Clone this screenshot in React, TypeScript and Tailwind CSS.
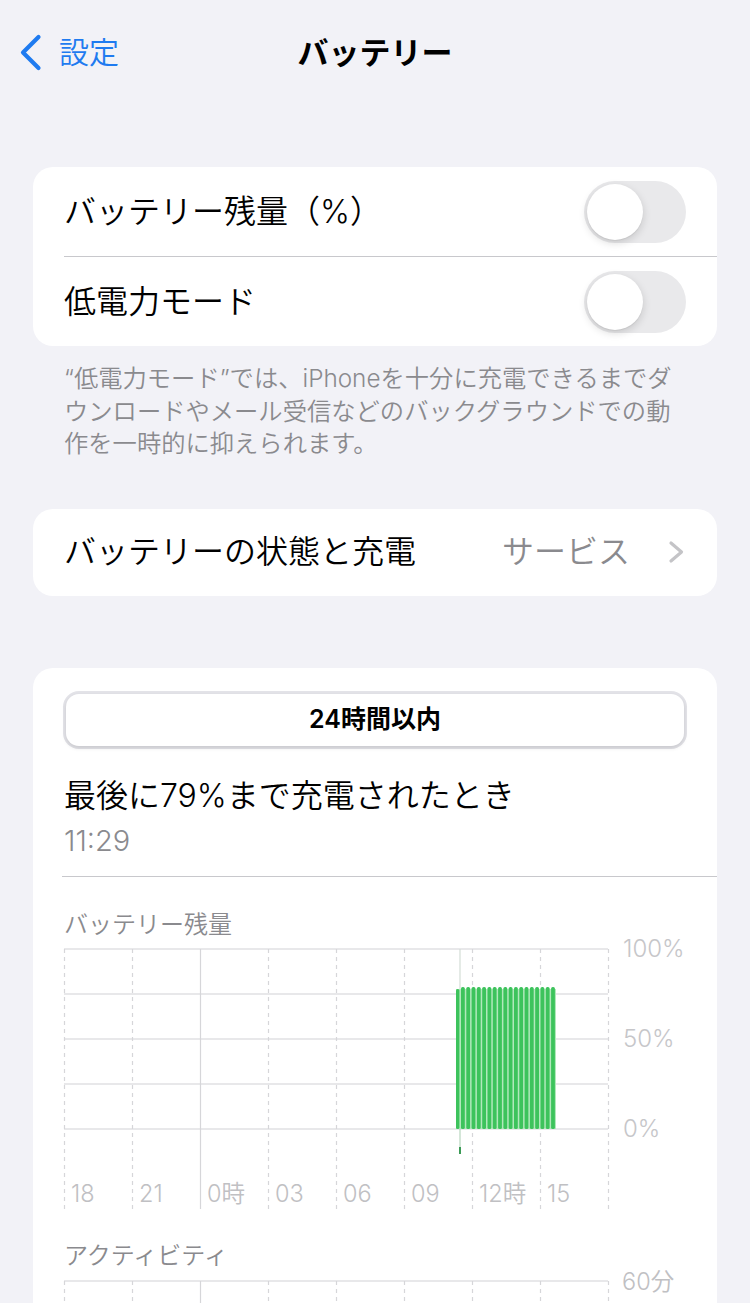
import React from "react";

const FONT = "Inter, 'Noto Sans CJK JP', sans-serif";

function Toggle() {
  return (
    <div className="w-[102px] h-[62px] rounded-full bg-[#e9e9eb] p-[3px] flex items-center">
      <div className="w-[56px] h-[56px] rounded-full bg-white shadow-[0_3px_8px_rgba(0,0,0,0.15),0_1px_1px_rgba(0,0,0,0.06)]" />
    </div>
  );
}

const cols = [0, 68, 136, 204, 272, 340, 408, 476, 544];
const xLabels = ["18", "21", "0時", "03", "06", "09", "12時", "15"];

function BatteryChart() {
  const hLines = [8, 53, 98, 143, 188];
  const bars: { x: number; w: number; top: number }[] = [{ x: 392, w: 3.4, top: 48 }];
  for (let i = 0; i < 18; i++) {
    bars.push({ x: 397 + i * 5.3, w: 3.8, top: 46 });
  }
  return (
    <svg width="653" height="270" viewBox="0 0 653 270" overflow="visible" className="block">
      {hLines.map((y) => (
        <line key={y} x1={0} x2={544} y1={y} y2={y} stroke="#e0e0e3" strokeWidth={1.5} />
      ))}
      {cols.map((x) => (
        <line
          key={x}
          x1={x + 0.5}
          x2={x + 0.5}
          y1={8}
          y2={268}
          stroke="#d6d6d9"
          strokeWidth={1.2}
          strokeDasharray={x === 136 ? undefined : "4 4"}
        />
      ))}
      <line x1={396} x2={396} y1={8} y2={188} stroke="#d3ddd6" strokeWidth={1.2} />
      <line x1={396} x2={396} y1={188} y2={212} stroke="#a9cdb1" strokeWidth={1} />
      <line x1={396} x2={396} y1={206} y2={213} stroke="#3a9a55" strokeWidth={2} />
      <rect x={392} y={48} width={100} height={140} fill="#b2e9bc" />
      {bars.map((b, i) => (
        <rect key={i} x={b.x} y={b.top} width={b.w} height={188 - b.top} rx={1.6} fill="#3dc35c" />
      ))}
      <text x={559} y={16} fontSize={24} fill="#c6c6c9" fontFamily={FONT}>100%</text>
      <text x={559} y={106} fontSize={24} fill="#c6c6c9" fontFamily={FONT}>50%</text>
      <text x={559} y={196} fontSize={24} fill="#c6c6c9" fontFamily={FONT}>0%</text>
      {xLabels.map((l, i) => (
        <text key={l} x={cols[i] + 7} y={261} fontSize={23.5} fill="#c0c0c3" fontFamily={FONT}>
          {l}
        </text>
      ))}
    </svg>
  );
}

function ActivityChart() {
  return (
    <svg width="653" height="32" viewBox="0 0 653 32" overflow="visible" className="block">
      <line x1={0} x2={544} y1={9} y2={9} stroke="#e0e0e3" strokeWidth={1.5} />
      {cols.map((x) => (
        <line
          key={x}
          x1={x + 0.5}
          x2={x + 0.5}
          y1={9}
          y2={32}
          stroke="#d6d6d9"
          strokeWidth={1.2}
          strokeDasharray={x === 136 ? undefined : "4 4"}
        />
      ))}
      <text x={558} y={18} fontSize={23.5} fill="#c0c0c3" fontFamily={FONT}>60分</text>
    </svg>
  );
}

export default function App() {
  return (
    <div className="w-[750px] h-[1303px] overflow-hidden bg-[#f2f2f7] font-[Inter,'Noto_Sans_CJK_JP',sans-serif] font-[350] text-black">
      {/* Nav bar */}
      <div className="relative h-[104px] flex items-center px-[19px]">
        <div className="flex items-center gap-[17px] text-[#1f7bf0]">
          <svg width="23" height="37" viewBox="0 0 23 37" fill="none">
            <polyline points="19.5,3 4,18.5 19.5,34" stroke="#1f7bf0" strokeWidth="4.2" strokeLinecap="round" strokeLinejoin="round" />
          </svg>
          <span className="text-[30px] leading-none">設定</span>
        </div>
        <div className="absolute inset-0 flex items-center justify-center pointer-events-none">
          <span className="text-[31px] font-bold leading-none">バッテリー</span>
        </div>
      </div>

      <div className="px-[33px] pt-[63px]">
        {/* Card 1 */}
        <div className="bg-white rounded-[20px] overflow-hidden">
          <div className="h-[89px] flex items-center justify-between pl-[31px] pr-[31px]">
            <span className="text-[32px] leading-none">バッテリー残量（%）</span>
            <Toggle />
          </div>
          <div className="ml-[31px] h-px bg-[#c8c8cc]" />
          <div className="h-[89px] flex items-center justify-between pl-[31px] pr-[31px]">
            <span className="text-[32px] leading-none">低電力モード</span>
            <Toggle />
          </div>
        </div>

        {/* Footnote */}
        <div className="mt-[16px] px-[31px] text-[24.3px] leading-[32.5px] text-[#8a8a8e] whitespace-nowrap">
          <div>“低電力モード”では、iPhoneを十分に充電できるまでダ</div>
          <div>ウンロードやメール受信などのバックグラウンドでの動</div>
          <div>作を一時的に抑えられます。</div>
        </div>

        {/* Card 2 */}
        <div className="mt-[49px] bg-white rounded-[20px] h-[87px] flex items-center justify-between pl-[31px] pr-[32px]">
          <span className="text-[32px] leading-none">バッテリーの状態と充電</span>
          <div className="flex items-center gap-[37px]">
            <span className="text-[32px] leading-none text-[#8a8a8e]">サービス</span>
            <svg width="18" height="24" viewBox="0 0 18 24" fill="none">
              <polyline points="4,3 14.5,12 4,21" stroke="#c4c4c7" strokeWidth="3.2" strokeLinecap="round" strokeLinejoin="round" />
            </svg>
          </div>
        </div>

        {/* Card 3 */}
        <div className="mt-[72px] bg-white rounded-t-[20px] pt-[23px] pl-[31px] h-[700px]">
          <div className="mr-[30px] -ml-[1px] h-[58px] rounded-[16px] bg-[#e3e3e8] p-[3px]">
            <div className="h-full rounded-[13px] bg-white shadow-[0_2px_4px_rgba(0,0,0,0.12)] flex items-center justify-center">
              <span className="text-[25px] font-semibold leading-none">24時間以内</span>
            </div>
          </div>
          <div className="mt-[27px] text-[32px] leading-[40px]">最後に79%まで充電されたとき</div>
          <div className="mt-[7px] text-[29px] leading-[36px] text-[#8a8a8e]">11:29</div>
          <div className="mt-[17px] -ml-[2px] h-px bg-[#c8c8cc]" />
          <div className="mt-[32px] text-[24px] leading-[32px] text-[#8a8a8e]">バッテリー残量</div>
          <BatteryChart />
          <div className="mt-[29px] text-[24px] leading-[32px] text-[#8a8a8e]">アクティビティ</div>
          <ActivityChart />
        </div>
      </div>
    </div>
  );
}
